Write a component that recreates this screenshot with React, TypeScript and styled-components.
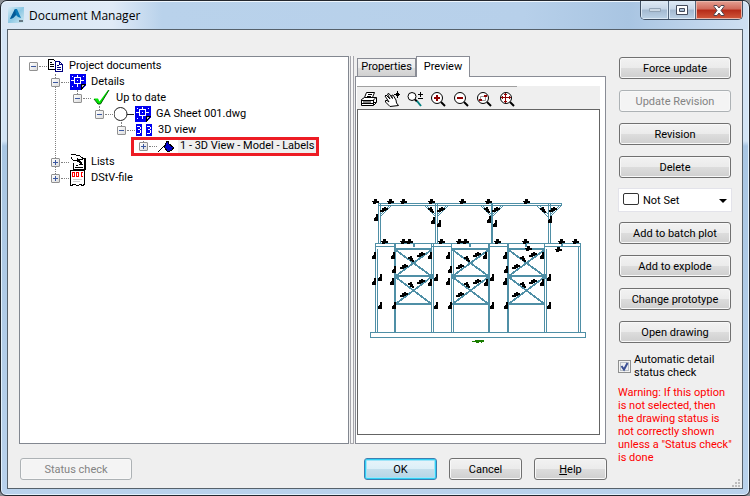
import React, { useState } from 'react';
import styled, { createGlobalStyle, css } from 'styled-components';

const GlobalStyle = createGlobalStyle`
  * { box-sizing: border-box; }
  body { margin: 0; background: #8b8f94; }
  body, button, select, input { font-family: Roboto, 'Noto Sans', sans-serif; font-size: 11px; color: #000; }
`;

const Window = styled.div`
  display: flex;
  flex-direction: column;
  min-height: 100vh;
  padding: 0 6px 6px;
  border: 1px solid #23272e;
  border-radius: 7px 7px 6px 6px;
  background: linear-gradient(180deg, #d3e4f5 0, #d3e4f5 140px, #a9c6e3 145px, #b9d2ec 100%);
  box-shadow: inset 0 0 0 1px #e3f1fc;
`;

const TitleBar = styled.header`
  display: flex;
  align-items: flex-start;
  height: 28px;
  margin: 0 -5px;
  padding: 0 5px 0 6px;
  border-radius: 6px 6px 0 0;
  border-top: 1px solid #eef6fd;
  background: linear-gradient(90deg, #d9e7f5 0, #e0ebf7 110px, #b9d2eb 160px, #b7d0ea 70%, #a9c5e2 84%, #cfe0f2 100%);
`;

const AppIcon = styled.svg`
  width: 16px;
  height: 16px;
  margin-top: 5px;
`;

const Title = styled.h1`
  flex: 1;
  margin: 5px 0 0 5px;
  font: 12px/17px 'Open Sans', 'Noto Sans', sans-serif;
`;

const Captions = styled.div`
  display: flex;
  height: 19px;
  margin: -1px 0 0;
  border: 1px solid #3f4f63;
  border-top: 0;
  border-radius: 0 0 5px 5px;
  overflow: hidden;
`;

const CaptionButton = styled.button<{ $close?: boolean }>`
  display: flex;
  align-items: center;
  justify-content: center;
  width: ${p => (p.$close ? 47 : 27)}px;
  padding: 0;
  border: 0;
  background: ${p => p.$close
    ? 'linear-gradient(#e4a093 0, #d0695a 45%, #b52a18 50%, #d2593c 100%)'
    : 'linear-gradient(#dfeaf5 0, #c6d6e7 45%, #a3b9d0 50%, #bcd2e6 100%)'};
  box-shadow: inset 0 0 0 1px ${p => (p.$close ? '#eab6aa' : '#dce9f5')};
  & + & { border-left: 1px solid #52657b; }
`;

const Client = styled.main`
  position: relative;
  flex: 1;
  display: flex;
  gap: 12px;
  padding: 26px 10px 8px 11px;
  border: 1px solid #56616b;
  background: #efefef;
`;

const Workspace = styled.div`
  flex: 1;
  min-width: 0;
  display: flex;
  flex-direction: column;
  gap: 14px;
`;

const Panes = styled.div`
  flex: 1;
  display: grid;
  grid-template-columns: minmax(0, 330fr) 6px minmax(0, 251fr);
`;

const TreePane = styled.section`
  padding: 1px 9px;
  border: 1px solid #828790;
  background: #fff;
`;

const Splitter = styled.div`
  margin: 0 1px;
  border: 1px solid #a6a6ac;
  border-width: 0 1px 1px;
  background: #f6f6f6;
`;

const TreeRow = styled.div<{ $level: number }>`
  display: flex;
  align-items: center;
  height: 16px;
  margin-left: ${p => p.$level * 22}px;
  position: relative;
  white-space: nowrap;
`;

const Outline = styled.div`
  position: absolute;
  inset: -1px auto -2px -8px;
  width: 188px;
  border: 3px solid #ed1c24;
  pointer-events: none;
`;

const Expander = styled.button<{ $reach: number }>`
  position: relative;
  flex: none;
  width: 9px;
  height: 9px;
  padding: 0;
  border: 1px solid #919191;
  border-radius: 1px;
  background: linear-gradient(135deg, #fff, #dcdcdc);
  svg { display: block; }
  &::before {
    content: '';
    position: absolute;
    left: 3px;
    bottom: 8px;
    height: ${p => p.$reach}px;
    border-left: 1px dotted #808080;
  }
`;

const Connector = styled.span`
  flex: none;
  width: 8px;
  border-top: 1px dotted #808080;
  margin: 0 1px;
`;

const NodeIcon = styled.svg`
  flex: none;
  display: block;
`;

const NodeText = styled.span<{ $selected?: boolean }>`
  margin-left: 3px;
  padding: 0 2px;
  line-height: 16px;
  ${p => p.$selected && css`background: #efefef;`}
`;

const TabPane = styled.section`
  display: flex;
  flex-direction: column;
`;

const TabList = styled.div`
  display: flex;
  align-items: flex-end;
  height: 21px;
  padding-left: 2px;
  margin-bottom: -1px;
  position: relative;
`;

const Tab = styled.button<{ $active: boolean }>`
  height: ${p => (p.$active ? 21 : 18)}px;
  width: ${p => (p.$active ? 54 : 59)}px;
  margin-bottom: ${p => (p.$active ? 0 : 1)}px;
  padding: 0 0 2px;
  border: 1px solid #898c95;
  border-bottom: 0;
  background: ${p => (p.$active ? '#fff' : 'linear-gradient(#f3f3f3, #ebebeb 50%, #dcdcdc 55%, #d0d0d0)')};
  white-space: nowrap;
`;

const TabBody = styled.div`
  flex: 1;
  display: flex;
  flex-direction: column;
  padding: 9px 5px 8px 1px;
  border: 1px solid #898c95;
  background: #fff;
`;

const Toolbar = styled.div`
  position: relative;
  display: flex;
  height: 23px;
  background: #efefef;
  &::before {
    content: '';
    position: absolute;
    top: 0;
    left: 0;
    width: 66%;
    border-top: 1px solid #a0a0a0;
  }
`;

const ToolButton = styled.button`
  display: flex;
  align-items: center;
  justify-content: center;
  width: 23px;
  padding: 2px 0 0;
  border: 0;
  background: none;
`;

const Canvas = styled.div`
  flex: 1;
  display: flex;
  align-items: flex-start;
  border: 1px solid #646464;
  background: #fff;
  svg { width: 100%; height: auto; display: block; }
`;

const Footer = styled.footer`
  display: flex;
  gap: 12px;
  padding-left: 1px;
  margin-right: -1px;
`;

const Spacer = styled.div`flex: 1;`;

const Button = styled.button<{ $width?: number; $primary?: boolean }>`
  height: 22px;
  ${p => p.$width && css`width: ${p.$width}px;`}
  padding: 0;
  border: 1px solid #707070;
  border-radius: 3px;
  background: linear-gradient(#f2f2f2, #ebebeb 49%, #dddddd 50%, #cfcfcf);
  box-shadow: inset 0 0 0 1px #f8f8f8;
  white-space: nowrap;
  ${p => p.$primary && css`
    border-color: #3c7fb1;
    background: linear-gradient(#e8f4fa, #dceff8 49%, #c4dfec 50%, #b4d4e5);
    box-shadow: inset 0 0 0 1px #2fd0f5, inset 0 0 0 2px #a0e4f8;
  `}
  &:disabled {
    border-color: #adb2b5;
    background: #f4f4f4;
    color: #838383;
  }
`;

const Sidebar = styled.aside`
  width: 114px;
  display: flex;
  flex-direction: column;
  gap: 11px;
  padding-top: 1px;
  ${Button} { margin: 0 1px; }
`;

const SelectBox = styled.label`
  position: relative;
  display: block;
  height: 24px;
  margin: -1px 0;
  svg { position: absolute; pointer-events: none; }
  svg:first-child { left: 5px; top: 5px; z-index: 1; }
  svg:last-child { right: 5px; top: 11px; }
`;

const Select = styled.select`
  appearance: none;
  width: 100%;
  height: 24px;
  padding: 0 16px 0 24px;
  border: 1px solid #e3e3ea;
  background: #fff;
`;

const CheckLabel = styled.label`
  display: flex;
  align-items: center;
  gap: 3px;
  margin-top: -1px;
  line-height: 13px;
  white-space: nowrap;
`;

const Checkbox = styled.input`
  appearance: none;
  flex: none;
  width: 13px;
  height: 13px;
  margin: 0;
  border: 1px solid #8e8f8f;
  box-shadow: inset 0 0 0 1px #f4f4f4, inset 0 0 0 2px #b9bfc6;
  background: #eceff2;
`;

const CheckHolder = styled.span`
  position: relative;
  display: flex;
  svg { position: absolute; inset: 0; pointer-events: none; }
  input:not(:checked) + svg { display: none; }
`;

const Warning = styled.p`
  margin: -4px 0 0;
  line-height: 13px;
  color: #f00;
  white-space: nowrap;
`;

const Grip = styled.svg`
  position: absolute;
  right: 2px;
  bottom: 1px;
`;

/* ---- tree icons ---- */

const Icon = ({ w = 16, children }: { w?: number; children: React.ReactNode }) => (
  <NodeIcon width={w} height="16" viewBox={`0 0 ${w} 16`} shapeRendering="crispEdges" aria-hidden="true">
    {children}
  </NodeIcon>
);

const CopyIcon = () => (
  <Icon>
    <path d="M.5 1.500h5l2 2v8h-7z" fill="#fff" stroke="#000" />
    <path d="M2 4.500h2M2 6.500h4M2 8.500h4" stroke="#000" />
    <path d="M7.500 3.500h4l3 3v7h-7z" fill="#fff" stroke="#000080" />
    <path d="M11.500 3.500v3h3M9 7.500h2M9 9.500h4M9 11.500h4" stroke="#000080" fill="none" />
  </Icon>
);

const SheetShape = () => (
  <>
    <path d="M0 0h16v11l-5 5H0z" fill="#0000f0" />
    <path d="M4.500 3.500h6v6h-6zM7.500 1v2M7.500 10v3M1 6.500h3M11 6.500h3" fill="none" stroke="#fff" />
    <path d="M7 6h1v1h-1z" fill="#fff" />
    <path d="M2 2h1v1h-1zM13 2h1v1h-1zM2 12h1v1h-1z" fill="#fff" />
    <path d="M11 15.500v-5h4.500z" fill="#c0c0c0" stroke="#000" />
  </>
);

const SheetIcon = () => <Icon><SheetShape /></Icon>;

const CheckIcon = () => (
  <NodeIcon width="19" height="16" viewBox="0 0 19 16" aria-hidden="true">
    <path d="M2 8.500l4 0 1.500 3L16 0h1L8.500 14H6z" fill="#00e800" />
    <path d="M17 0L8.500 14H6L2 9" fill="none" stroke="#005800" strokeWidth="1" />
  </NodeIcon>
);

const CircleSheetIcon = () => (
  <NodeIcon width="37" height="16" viewBox="0 0 37 16" aria-hidden="true">
    <circle cx="6.500" cy="8" r="6.500" fill="#fff" stroke="#222" />
    <path d="M13 8.500h7" stroke="#222" />
    <g transform="translate(21 0)" shapeRendering="crispEdges"><SheetShape /></g>
  </NodeIcon>
);

const ViewIcon = () => (
  <Icon w={17}>
    <path d="M0 2h6v12H0zM10 2h6v12h-6z" fill="#0000f0" />
    <path d="M1 4.500h3M2 7.500h2M1 11.500h3M4.500 5v2M4.500 8v3M11 4.500h3M12 7.500h2M11 11.500h3M14.500 5v2M14.500 8v3" stroke="#fff" />
  </Icon>
);

const LabelIcon = () => (
  <Icon w={17}>
    <path d="M.5 13.500L11 3.500" stroke="#000" />
    <path d="M8.500 3.500h2v2l5 4-1 2-3 2h-2l-3-4z" fill="#0000c8" stroke="#000" />
  </Icon>
);

const ListsIcon = () => (
  <Icon>
    <path d="M8 4.500h6.500v11h-11V9" fill="#fff" stroke="#000" />
    <path d="M1 .5h4l2 1h2l3 2v2H9l-2-1 4 4v1L6 6H3L1 3.500" fill="#fff" stroke="#000" />
    <path d="M9 10.500h4M5 13.500h8M6 11.500h2" stroke="#000" />
    <path d="M15 4v12" stroke="#000" strokeWidth="2" />
  </Icon>
);

const DocIcon = () => (
  <Icon>
    <path d="M.5 .5h14v14l-2 1-2-1-3 1-3-1-4 1z" fill="#fff" stroke="#000" />
    <path d="M2.500 2.500v4h1.500v-4zM6.500 2.500h2v4h-2zM13 2.500h-2v4h2" fill="none" stroke="#f00" />
    <path d="M3 9.500h9M3 11.500h7" stroke="#d0d0d0" />
  </Icon>
);

interface TreeItem {
  level: number;
  text: string;
  icon: React.ReactNode;
  open?: boolean;
  reach: number;
  selected?: boolean;
}

const items: TreeItem[] = [
  { level: 0, text: 'Project documents', icon: <CopyIcon />, open: true, reach: 0 },
  { level: 1, text: 'Details', icon: <SheetIcon />, open: true, reach: 4 },
  { level: 2, text: 'Up to date', icon: <CheckIcon />, open: true, reach: 4 },
  { level: 3, text: 'GA Sheet 001.dwg', icon: <CircleSheetIcon />, open: true, reach: 4 },
  { level: 4, text: '3D view', icon: <ViewIcon />, open: true, reach: 4 },
  { level: 5, text: '1 - 3D View - Model - Labels', icon: <LabelIcon />, reach: 4, selected: true },
  { level: 1, text: 'Lists', icon: <ListsIcon />, reach: 71 },
  { level: 1, text: 'DStV-file', icon: <DocIcon />, reach: 7 },
];

/* ---- toolbar icons ---- */

const Lens = () => (
  <>
    <circle cx="7" cy="7" r="5.500" fill="#fff" stroke="#000" />
    <path d="M11 11l4 4" stroke="#000" strokeWidth="2" />
  </>
);

const tools: { label: string; art: React.ReactNode }[] = [
  { label: 'Print', art: (
    <>
      <path d="M5.500 1.500h8l-2 5h-8z" fill="#fff" stroke="#000" />
      <path d="M7 3.500h4M6 5.500h4" stroke="#000" />
      <path d="M.5 8.500l3-2h12v5l-3 3H.5z" fill="#fff" stroke="#000" />
      <path d="M1 9.500h11l3-3M12.500 9v5M1 12.500h11M13 11.500h2" stroke="#000" fill="none" />
      <path d="M2 11h8" stroke="#000" />
    </>
  ) },
  { label: 'Pan', art: (
    <>
      <path d="M6 15.500L1.500 11V9.500H3l2 1.500-4-6 1-1 4 4-2.500-5 1.500-.5 3.500 5L7.500 4.500 9 4l3 5 .5 3 2 2.500z" fill="#fff" stroke="#000" />
      <path d="M13.500 0v7M10 3.500h6M12 2.500h3M12 4.500h3" fill="none" stroke="#000" />
    </>
  ) },
  { label: 'Zoom', art: (
    <>
      <circle cx="5" cy="5.500" r="4" fill="#fff" stroke="#000" />
      <path d="M8 8.500l2 2" stroke="#000" strokeWidth="2" />
      <path d="M10 10l4 5" stroke="#008080" strokeWidth="2" />
      <path d="M13.500 1v5M11 3.500h5M11 7.500h5" stroke="#000" />
    </>
  ) },
  { label: 'Zoom in', art: <><Lens /><path d="M4 7h6M7 4v6" stroke="#900000" strokeWidth="2" /></> },
  { label: 'Zoom out', art: <><Lens /><path d="M4 7h6" stroke="#900000" strokeWidth="2" /></> },
  { label: 'Zoom window', art: <><Lens /><path d="M4.500 5.500h5v4h-5z" stroke="#999" fill="none" /><path d="M3 8h3v2H3zM8 4h3v2H8z" fill="#900000" /></> },
  { label: 'Zoom extents', art: <><Lens /><path d="M2 6.500h10M6.500 2v10M5 3.500h3M5 10.500h3M3.500 5v3M10.500 5v3" stroke="#900000" /></> },
];

/* ---- structure drawing ---- */

const bays = [[395, 432], [452, 489], [508, 545]];
const steel = '#4f8fa6';

const heads = [[376, 201], [391, 201], [404, 201], [432, 201], [463, 201], [489, 201], [527, 201], [385, 241], [404, 241], [410, 241], [442, 241], [460, 241], [466, 241], [498, 241], [526, 241], [529, 248], [562, 241], [559, 249], [576, 241]];
const slants = [[384, 210], [441, 210], [496, 210], [553, 210],
  ...[0, 56, 112].flatMap(d => [[421 + d, 255], [404 + d, 267], [421 + d, 282], [404 + d, 295]])];
const backSlants = [[431, 210], [487, 210], [543, 210],
  ...[0, 56, 112].flatMap(d => [[411 + d, 259], [411 + d, 285]])];
const flags = [[376, 218], [433, 221], [439, 224], [489, 220], [495, 224], [550, 220],
  [374, 256], [393, 256], [430, 256], [448, 256], [485, 256], [505, 256], [542, 256],
  [374, 282], [380, 278], [380, 306], [394, 270], [392, 282], [394, 306], [430, 283], [436, 278], [436, 306],
  [450, 270], [448, 282], [450, 306], [492, 278], [486, 283], [492, 306], [506, 270], [505, 282], [506, 306],
  [549, 278], [542, 283], [549, 306]];

const Elevation = () => (
  <svg viewBox="358 110 241 323" preserveAspectRatio="xMidYMin meet" role="img" aria-label="3D view of the steel frame" shapeRendering="crispEdges">
    <g stroke={steel} fill="none">
      <path d="M379 203.500H562M379 205.500H562M561.500 203v3" />
      <path d="M378.500 203v41M380.500 203v41M435.500 203v41M437.500 203v41M491.500 203v41M492.500 203v41M548.500 203v41M550.500 203v41" />
      <path d="M381 216l10-10M381 214l8-8M435 216l-10-10M435 214l-8-8M438 216l10-10M438 214l8-8M491 216l-10-10M491 214l-8-8M493 216l10-10M493 214l8-8M548 217l-11-11M548 214l-8-8M551 216l10-10M551 214l8-8" />
      <path d="M375 243.500H581M375 246.500H395M432 246.500H452M489 246.500H508M545 246.500H581" />
      <path d="M414 243v4M470 243v4M526 243v4M562 243v4" strokeWidth="2" />
      <path d="M375.500 243v90M377.500 249v84M431.500 243v90M433.500 243v90M451.500 243v90M453.500 249v84M544.500 243v90M546.500 249v84M578.500 246v87M580.500 243v90" />
      <path d="M395 243v90M489 243v90M508 243v90" strokeWidth="2" />
      {bays.map(([l, r]) => (
        <g key={l}>
          <path d={`M${l} 249H${r}M${l} 276H${r}M${l} 304H${r}`} strokeWidth="2" />
          <path d={`M${l} 249L${r} 276L${l} 304M${r} 249L${l} 276L${r} 304`} />
          <path d={`M${l} 250l${r - l} 27M${r} 277L${l} 305M${r} 250L${l} 277M${l} 277l${r - l} 28`} />
          <path d={`M${l} 274h3v4h-3zM${r - 3} 274h3v4h-3z`} fill={steel} />
        </g>
      ))}
      <path d="M370.500 332.500H585.500V337.500H370.500z" />
    </g>
    <g fill="#000">
      {heads.map(([x, y]) => <path key={`h${x}-${y}`} transform={`translate(${x} ${y})`} d="M-2-2h3v2h2v2h-3v1h-3v-2h-1v-1h2z" />)}
      {slants.map(([x, y]) => <path key={`s${x}-${y}`} transform={`translate(${x} ${y})`} d="M-4 2v-2h2v-2h2v-1h2v1h2v2h-2v1h-2v1z" />)}
      {backSlants.map(([x, y]) => <path key={`b${x}-${y}`} transform={`translate(${x} ${y})`} d="M-3-2h2v-1h2v2h1v2h1v2h-2v-1h-2v-2h-2z" />)}
      {flags.map(([x, y]) => <path key={`f${x}-${y}`} transform={`translate(${x} ${y})`} d="M0-4h2v7h-4v-3h1v-1h1z" />)}
    </g>
    <path d="M472 341h3v-1h9v2h-2v1h-1v-1h-2v1h-3v-1h-4z" fill="#1a7d00" />
  </svg>
);

export default function App() {
  const [tab, setTab] = useState('Preview');
  return (
    <>
      <GlobalStyle />
      <Window>
        <TitleBar>
          <AppIcon viewBox="0 0 16 16" aria-hidden="true">
            <defs>
              <linearGradient id="tile" x1="0" y1="0" x2="1" y2="1">
                <stop offset="0" stopColor="#d8edf6" /><stop offset=".5" stopColor="#8cc8e4" /><stop offset="1" stopColor="#d5e9f2" />
              </linearGradient>
            </defs>
            <path d="M0 0h16v16H0z" fill="url(#tile)" />
            <path d="M7 2h2l4 9-3-1-2-2-3 3-3 1z" fill="#0878b8" />
            <path d="M7 2l1 6-3 3-3 1z" fill="#065a96" />
            <path d="M11 13h4v2h-4z" fill="#667985" />
          </AppIcon>
          <Title>Document Manager</Title>
          <Captions>
            <CaptionButton aria-label="Minimize">
              <svg width="12" height="5"><path d="M.5.5h11v3H.5z" fill="#ccd9e5" stroke="#92a4b6" /></svg>
            </CaptionButton>
            <CaptionButton aria-label="Maximize">
              <svg width="12" height="10"><path d="M.5.5h11v9H.5zM3.500 3.500h5v3h-5z" fill="#fff" fillRule="evenodd" stroke="#444c5c" /></svg>
            </CaptionButton>
            <CaptionButton $close aria-label="Close">
              <svg width="12" height="11" viewBox="0 0 12 11">
                <path d="M1 .5h3l2 2.500 2-2.500h3v1L8 5.500l3 4v1H8L6 8l-2 2.500H1v-1l3-4-3-4z" fill="#fff" stroke="#4d4650" />
              </svg>
            </CaptionButton>
          </Captions>
        </TitleBar>
        <Client>
          <Workspace>
            <Panes>
              <TreePane role="tree" aria-label="Documents">
                {items.map(item => (
                  <TreeRow key={item.text} $level={item.level} role="treeitem" aria-level={item.level + 1} aria-expanded={!!item.open}>
                    <Expander $reach={item.reach} aria-label={`Toggle ${item.text}`}>
                      <svg width="7" height="7" shapeRendering="crispEdges">
                        <path d={item.open ? 'M1 3.500h5' : 'M1 3.500h5M3.500 1v5'} stroke="#3c58a0" />
                      </svg>
                    </Expander>
                    <Connector />
                    {item.icon}
                    <NodeText $selected={item.selected}>{item.text}</NodeText>
                    {item.selected && <Outline />}
                  </TreeRow>
                ))}
              </TreePane>
              <Splitter />
              <TabPane>
                <TabList role="tablist">
                  {['Properties', 'Preview'].map(name => (
                    <Tab key={name} role="tab" aria-selected={tab === name} $active={tab === name} onClick={() => setTab(name)}>{name}</Tab>
                  ))}
                </TabList>
                <TabBody role="tabpanel">
                  <Toolbar>
                    {tools.map(tool => (
                      <ToolButton key={tool.label} aria-label={tool.label}>
                        <svg width="16" height="16" viewBox="0 0 16 16">{tool.art}</svg>
                      </ToolButton>
                    ))}
                  </Toolbar>
                  <Canvas><Elevation /></Canvas>
                </TabBody>
              </TabPane>
            </Panes>
            <Footer>
              <Button $width={112} disabled>Status check</Button>
              <Spacer />
              <Button $width={73} $primary>OK</Button>
              <Button $width={73}>Cancel</Button>
              <Button $width={73}><u>H</u>elp</Button>
            </Footer>
          </Workspace>
          <Sidebar>
            <Button>Force update</Button>
            <Button disabled>Update Revision</Button>
            <Button>Revision</Button>
            <Button>Delete</Button>
            <SelectBox>
              <svg width="16" height="12"><rect x=".5" y=".5" width="15" height="11" rx="1.500" fill="#fff" stroke="#333" /></svg>
              <Select aria-label="Status" defaultValue="Not Set"><option>Not Set</option></Select>
              <svg width="8" height="4"><path d="M0 0h8L4 4z" /></svg>
            </SelectBox>
            <Button>Add to batch plot</Button>
            <Button>Add to explode</Button>
            <Button>Change prototype</Button>
            <Button>Open drawing</Button>
            <CheckLabel>
              <CheckHolder>
                <Checkbox type="checkbox" defaultChecked />
                <svg width="13" height="13"><path d="M3.500 6l2.500 3.500L9.500 3" fill="none" stroke="#3a4f94" strokeWidth="2" /></svg>
              </CheckHolder>
              <span>Automatic detail<br />status check</span>
            </CheckLabel>
            <Warning>
              Warning: If this option<br />is not selected, then<br />the drawing status is<br />not correctly shown<br />unless a "Status check"<br />is done
            </Warning>
          </Sidebar>
          <Grip width="8" height="8" aria-hidden="true">
            <path d="M6 0h2v2H6zM3 3h2v2H3zM6 3h2v2H6zM0 6h2v2H0zM3 6h2v2H3zM6 6h2v2H6z" fill="#bdbdbd" />
          </Grip>
        </Client>
      </Window>
    </>
  );
}
